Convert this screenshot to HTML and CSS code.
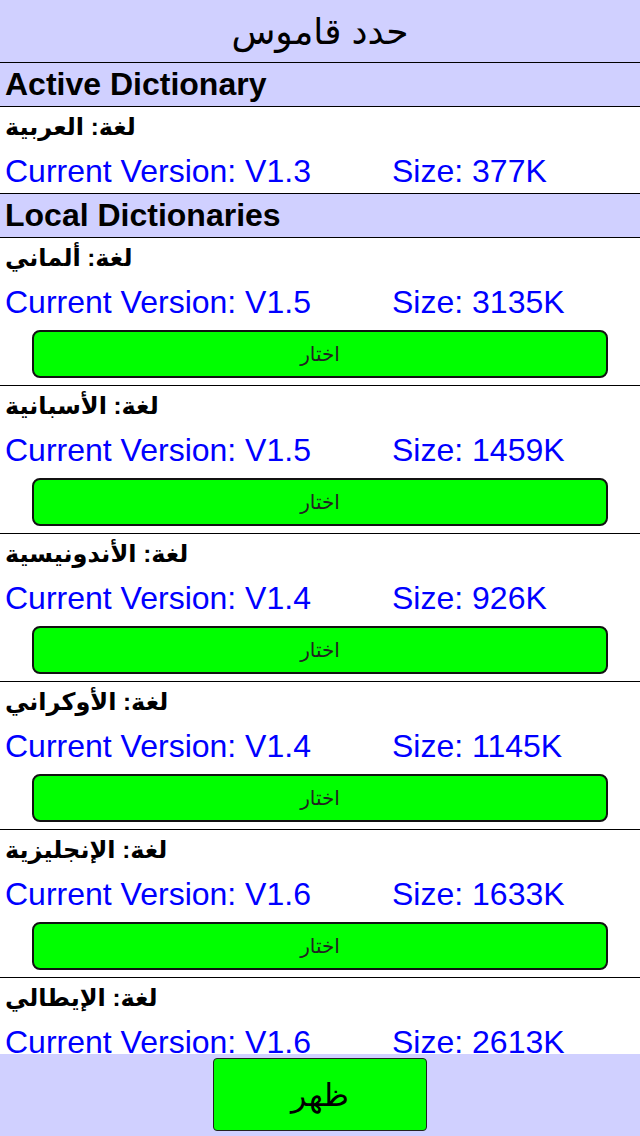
FILE: index.html
```html
<!DOCTYPE html>
<html lang="ar">
<head>
    <meta charset="UTF-8">
    <meta name="viewport" content="width=device-width, initial-scale=1.0">
    <title>حدد قاموس</title>
    <link rel="stylesheet" href="styles.css">
</head>
<body>
    <!-- Cabecera -->
    <header class="top-bar">
        <h1>حدد قاموس</h1>
    </header>

    <!-- Lista de diccionarios -->
    <div class="dict-list">
        <div class="section-title">Active Dictionary</div>
        <div class="dict-item">
            <div class="dict-name" dir="rtl">لغة: العربية</div>
            <div class="dict-info">
                <span>Current Version: V1.3</span>
                <span>Size: 377K</span>
            </div>
        </div>

        <div class="section-title">Local Dictionaries</div>
        <div class="dict-item">
            <div class="dict-name" dir="rtl">لغة: ألماني</div>
            <div class="dict-info">
                <span>Current Version: V1.5</span>
                <span>Size: 3135K</span>
            </div>
            <button class="pick-btn">اختار</button>
        </div>
        <div class="dict-item">
            <div class="dict-name" dir="rtl">لغة: الأسبانية</div>
            <div class="dict-info">
                <span>Current Version: V1.5</span>
                <span>Size: 1459K</span>
            </div>
            <button class="pick-btn">اختار</button>
        </div>
        <div class="dict-item">
            <div class="dict-name" dir="rtl">لغة: الأندونيسية</div>
            <div class="dict-info">
                <span>Current Version: V1.4</span>
                <span>Size: 926K</span>
            </div>
            <button class="pick-btn">اختار</button>
        </div>
        <div class="dict-item">
            <div class="dict-name" dir="rtl">لغة: الأوكراني</div>
            <div class="dict-info">
                <span>Current Version: V1.4</span>
                <span>Size: 1145K</span>
            </div>
            <button class="pick-btn">اختار</button>
        </div>
        <div class="dict-item">
            <div class="dict-name" dir="rtl">لغة: الإنجليزية</div>
            <div class="dict-info">
                <span>Current Version: V1.6</span>
                <span>Size: 1633K</span>
            </div>
            <button class="pick-btn">اختار</button>
        </div>
        <div class="dict-item">
            <div class="dict-name" dir="rtl">لغة: الإيطالي</div>
            <div class="dict-info">
                <span>Current Version: V1.6</span>
                <span>Size: 2613K</span>
            </div>
            <button class="pick-btn">اختار</button>
        </div>
    </div>

    <!-- Barra inferior -->
    <footer class="bottom-bar">
        <button class="show-btn">ظهر</button>
    </footer>
</body>
</html>
```

FILE: styles.css
```css
/* Colores */
:root {
    --bar-bg: #d0d0ff; /* lila claro */
    --btn-green: #00ff00;
    --info-blue: #0000ff;
    --line: #000000;
}

body {
    margin: 0;
    width: 640px;
    height: 1136px;
    display: flex;
    flex-direction: column;
    overflow: hidden;
    background: white;
    font-family: "Liberation Sans", "DejaVu Sans", Arial, sans-serif;
    color: black;
}

/* Cabecera */
.top-bar {
    height: 61px;
    background-color: var(--bar-bg);
    border-bottom: 1px solid var(--line);
    display: flex;
    align-items: center;
    justify-content: center;
    padding-top: 1px;
}

.top-bar h1 {
    margin: 0;
    font-size: 36px;
    font-weight: normal;
}

/* Lista */
.dict-list {
    height: 991px;
    overflow: hidden;
}

.section-title {
    height: 43px;
    line-height: 43px;
    padding-left: 5px;
    background-color: var(--bar-bg);
    border-bottom: 1px solid var(--line);
    font-size: 32px;
    font-weight: bold;
}

.dict-item {
    border-bottom: 1px solid var(--line);
    display: flex;
    flex-direction: column;
}

.dict-name {
    height: 42px;
    line-height: 40px;
    padding-left: 5px;
    font-size: 24px;
    font-weight: bold;
    text-align: left;
}

.dict-info {
    height: 44px;
    line-height: 44px;
    padding-left: 5px;
    display: grid;
    grid-template-columns: 387px 1fr;
    color: var(--info-blue);
    font-size: 32px;
    white-space: nowrap;
}

.pick-btn {
    margin: 6px 0 7px 32px;
    width: 576px;
    height: 48px;
    background-color: var(--btn-green);
    border: 2px solid #111;
    border-radius: 8px;
    font-family: "Liberation Sans", "DejaVu Sans", sans-serif;
    font-size: 20px;
    color: #222;
    padding: 0;
}

/* Barra inferior */
.bottom-bar {
    flex: 1;
    background-color: var(--bar-bg);
    display: flex;
    justify-content: center;
    align-items: flex-start;
}

.show-btn {
    margin-top: 4px;
    width: 214px;
    height: 73px;
    background-color: var(--btn-green);
    border: 1px solid #222;
    border-radius: 4px;
    font-family: "Liberation Sans", "DejaVu Sans", sans-serif;
    font-size: 32px;
    line-height: 1;
    color: black;
    padding: 0;
}
```
